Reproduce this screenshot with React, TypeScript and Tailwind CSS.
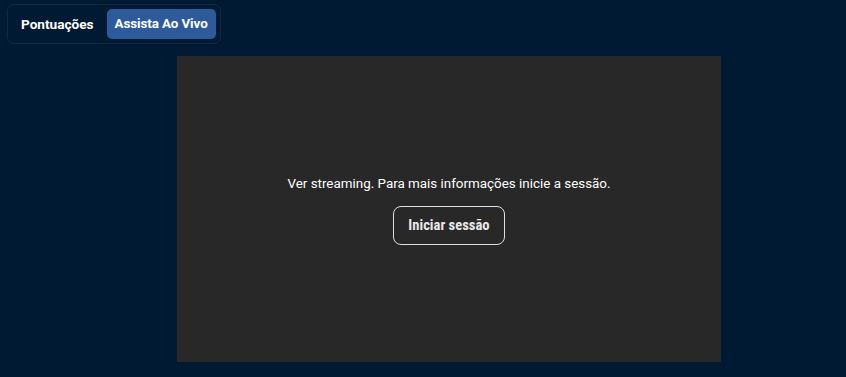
export default function App() {
  return (
    <div className="min-h-[377px] w-full bg-[#011a33] pt-[4px] font-['Roboto',sans-serif]">
      <div className="ml-[7px] inline-flex h-[40px] items-center gap-[4px] rounded-[7px] border border-[#16283d] px-[4px]">
        <button className="h-[30px] rounded-[5px] px-[9px] text-[13.6px] font-bold text-white">
          Pontuações
        </button>
        <button className="h-[30px] rounded-[5px] bg-[#2d5a9b] px-[8px] text-[13.4px] font-bold tracking-[-0.1px] text-white">
          Assista Ao Vivo
        </button>
      </div>
      <div className="ml-[177px] mt-[12px] flex h-[306px] w-[544px] flex-col items-center justify-center bg-[#282828] pt-[1px]">
        <p className="text-[13.4px] text-white">
          Ver streaming. Para mais informações inicie a sessão.
        </p>
        <button className="mt-[12px] h-[39px] w-[112px] rounded-[8px] border border-[#e0e0e0] text-[14.6px] font-bold text-[#e8e8e8] [font-stretch:condensed]">
          Iniciar sessão
        </button>
      </div>
    </div>
  );
}
